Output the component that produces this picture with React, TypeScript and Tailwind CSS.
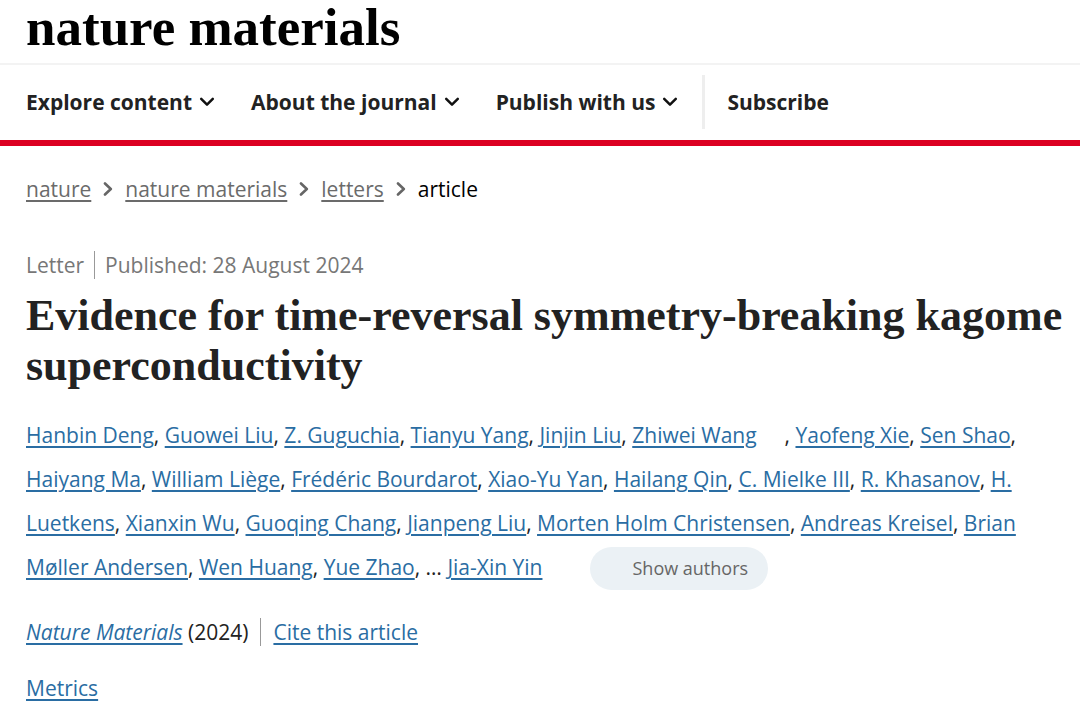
import { Fragment } from 'react'

const menu = ['Explore content', 'About the journal', 'Publish with us']

const crumbs = ['nature', 'nature materials', 'letters']

const authors = [
  { name: 'Hanbin Deng' },
  { name: 'Guowei Liu' },
  { name: 'Z. Guguchia' },
  { name: 'Tianyu Yang' },
  { name: 'Jinjin Liu' },
  { name: 'Zhiwei Wang', orcid: true },
  { name: 'Yaofeng Xie' },
  { name: 'Sen Shao' },
  { name: 'Haiyang Ma' },
  { name: 'William Liège' },
  { name: 'Frédéric Bourdarot' },
  { name: 'Xiao-Yu Yan' },
  { name: 'Hailang Qin' },
  { name: 'C. Mielke III' },
  { name: 'R. Khasanov' },
  { name: 'H. Luetkens' },
  { name: 'Xianxin Wu' },
  { name: 'Guoqing Chang' },
  { name: 'Jianpeng Liu' },
  { name: 'Morten Holm Christensen' },
  { name: 'Andreas Kreisel' },
  { name: 'Brian Møller Andersen' },
  { name: 'Wen Huang' },
  { name: 'Yue Zhao' },
]

const link = 'text-[#2a6da3] underline decoration-2 underline-offset-3'

function ChevronDown() {
  return (
    <svg width="16" height="16" viewBox="0 0 16 16" fill="none" stroke="#111" strokeWidth="2.5" strokeLinecap="round" strokeLinejoin="round">
      <path d="M2.2 4.8 8 10.6 13.8 4.8" />
    </svg>
  )
}

function ChevronRight() {
  return (
    <svg width="10" height="14" viewBox="0 0 10 14" fill="none" stroke="#666" strokeWidth="2.6" strokeLinecap="round" strokeLinejoin="round">
      <path d="M2 1.5 7.8 7 2 12.5" />
    </svg>
  )
}

export default function App() {
  return (
    <div className="min-h-screen bg-white font-['Open_Sans','Noto_Sans',sans-serif] text-[21px] leading-7 text-[#222]">
      <header className="border-b-6 border-[#dc0022]">
        <div className="border-b-2 border-[#f3f3f3] px-[26px] pb-2">
          <a href="#" className="block font-['Liberation_Serif',serif] text-[53px] leading-[55px] font-bold text-black">
            nature materials
          </a>
        </div>
        <nav className="flex items-center pt-[10px] pb-[11px] pl-[26px] font-bold">
          <div className="flex gap-9 pr-6">
            {menu.map((item) => (
              <button key={item} className="flex items-center gap-[7px]">
                {item}
                <ChevronDown />
              </button>
            ))}
          </div>
          <div className="flex h-[54px] items-center border-l-3 border-[#eee] pl-[22px]">
            <a href="#">Subscribe</a>
          </div>
        </nav>
      </header>

      <main className="px-[26px] pb-2">
        <nav aria-label="Breadcrumb" className="pt-[29px]">
          <ol className="flex items-center">
            {crumbs.map((crumb) => (
              <li key={crumb} className="flex items-center">
                <a href="#" className="text-[#6b6b6b] underline decoration-2 underline-offset-3">
                  {crumb}
                </a>
                <span className="px-3">
                  <ChevronRight />
                </span>
              </li>
            ))}
            <li className="text-black">article</li>
          </ol>
        </nav>

        <ul className="mt-12 flex text-[#777]">
          <li className="border-r border-[#999] pr-[10px]">Letter</li>
          <li className="pl-[10px]">
            Published: <time dateTime="2024-08-28">28 August 2024</time>
          </li>
        </ul>

        <h1 className="mt-3 -mr-4 font-['Liberation_Serif',serif] text-[44px] leading-[50px] font-bold">
          Evidence for time-reversal symmetry-breaking kagome superconductivity
        </h1>

        <p className="mt-[22px] leading-[44px]">
          {authors.map((author) => (
            <Fragment key={author.name}>
              <a href="#" className={link}>{author.name}</a>
              {author.orcid && <span className="inline-block w-7" />}
              {', '}
            </Fragment>
          ))}
          … <a href="#" className={link}>Jia-Xin Yin</a>
          <button className="ml-12 rounded-full bg-[#ebf1f5] pr-5 pl-[42px] text-[18px] leading-[43px] text-[#666]">
            Show authors
          </button>
        </p>

        <div className="mt-7 flex">
          <p className="border-r border-[#999] pr-3">
            <a href="#" className={link}><i>Nature Materials</i></a> (2024)
          </p>
          <a href="#" className={`${link} ml-3`}>Cite this article</a>
        </div>

        <p className="mt-7">
          <a href="#" className={link}>Metrics</a>
        </p>
      </main>
    </div>
  )
}
